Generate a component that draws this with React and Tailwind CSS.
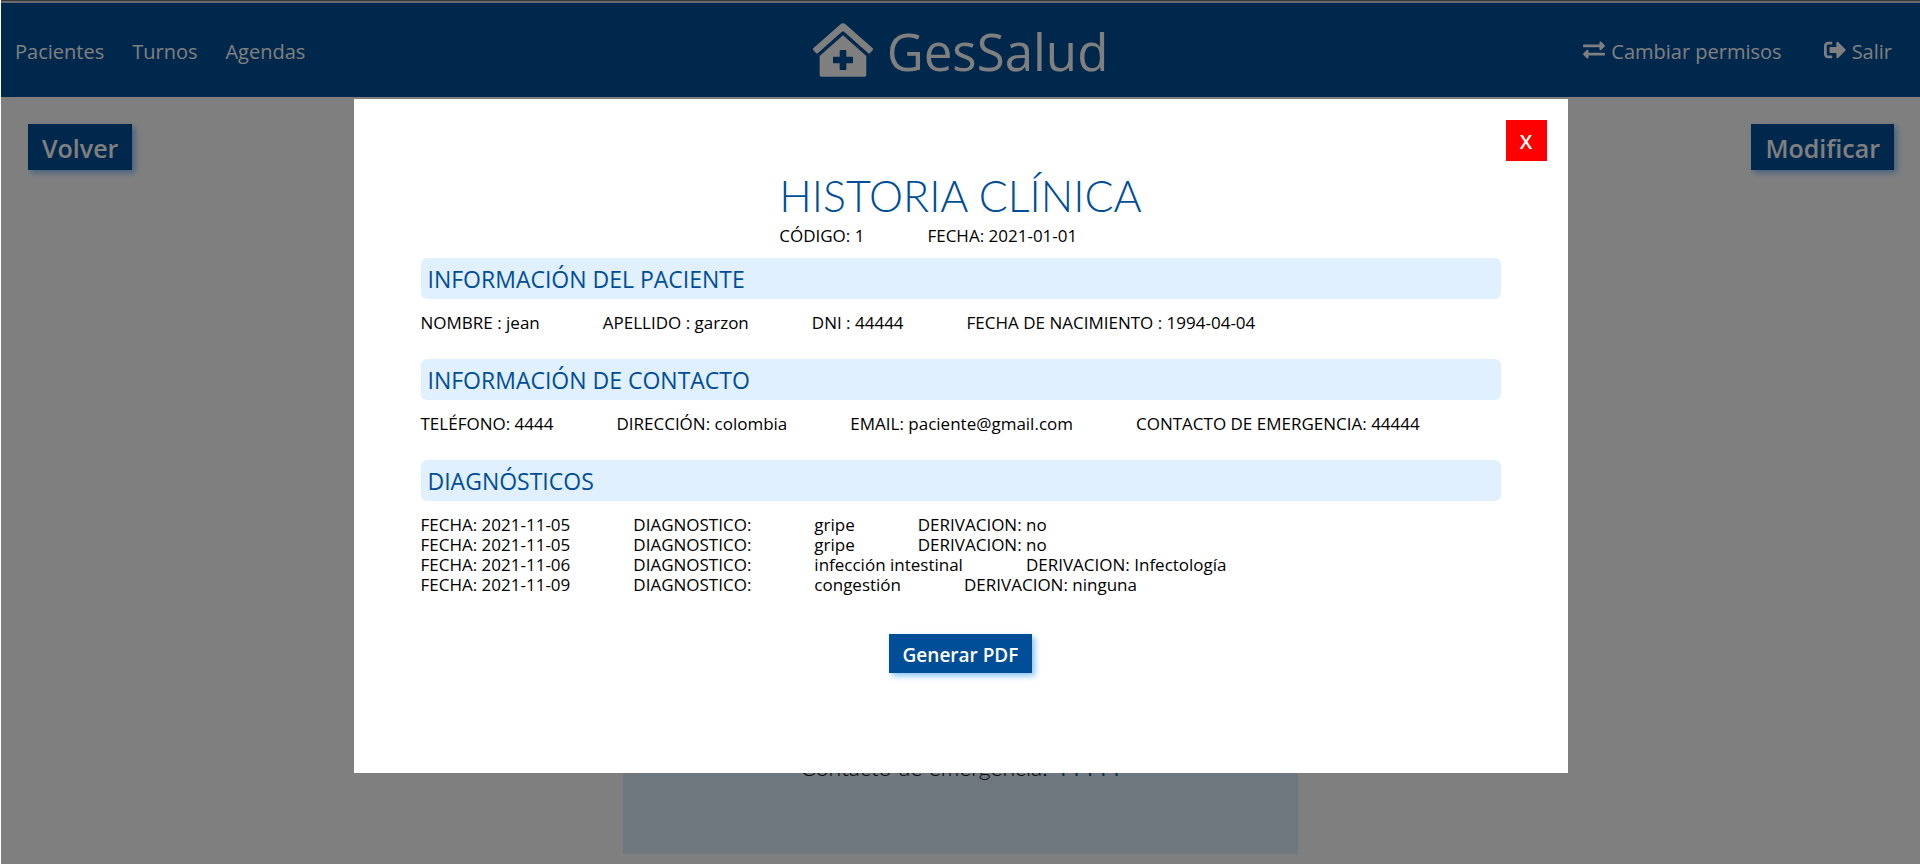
import { FaClinicMedical, FaExchangeAlt, FaSignOutAlt } from "react-icons/fa";

const patient = [
  ["NOMBRE :", "jean"],
  ["APELLIDO :", "garzon"],
  ["DNI :", "44444"],
  ["FECHA DE NACIMIENTO :", "1994-04-04"],
];

const contact = [
  ["TELÉFONO:", "4444"],
  ["DIRECCIÓN:", "colombia"],
  ["EMAIL:", "paciente@gmail.com"],
  ["CONTACTO DE EMERGENCIA:", "44444"],
];

const diagnoses = [
  { date: "2021-11-05", name: "gripe", referral: "no" },
  { date: "2021-11-05", name: "gripe", referral: "no" },
  { date: "2021-11-06", name: "infección intestinal", referral: "Infectología" },
  { date: "2021-11-09", name: "congestión", referral: "ninguna" },
];

function ActionButton({ children, className }) {
  return (
    <button
      type="button"
      className={`bg-[#004e98] px-[14px] pt-[3px] font-semibold text-white shadow-[3px_3px_6px_#8cc4ff] ${className}`}
    >
      {children}
    </button>
  );
}

function SectionTitle({ children }) {
  return (
    <h3 className="rounded-md bg-[#e0f0ff] px-[7px] pt-px text-[23px] leading-10 text-[#004e98]">
      {children}
    </h3>
  );
}

function Fields({ items }) {
  return (
    <div className="mt-[14px] mb-[26px] flex flex-wrap gap-x-[63px]">
      {items.map(([label, value]) => (
        <p key={label}>
          {label} {value}
        </p>
      ))}
    </div>
  );
}

export default function App() {
  return (
    <div className="relative min-h-screen overflow-hidden border-l border-white bg-white font-['Open_Sans',sans-serif]">
      <div className="h-[3px] border-t border-[#707070] bg-[#d0d4dc]" />
      <header className="grid h-[94px] grid-cols-[1fr_auto_1fr] items-center bg-[#004e98] px-[14px] pt-[3px] text-xl text-white">
        <nav className="flex gap-7">
          <a href="#pacientes">Pacientes</a>
          <a href="#turnos">Turnos</a>
          <a href="#agendas">Agendas</a>
        </nav>
        <div className="flex items-center justify-center gap-[14px]">
          <FaClinicMedical className="mb-[3px] size-[60px]" />
          <span className="text-[51px] leading-none">GesSalud</span>
        </div>
        <div className="flex justify-end gap-[42px] pr-[14px]">
          <a href="#permisos" className="flex items-center gap-[6px]">
            <FaExchangeAlt className="mb-1 size-[22px]" />
            Cambiar permisos
          </a>
          <a href="#salir" className="flex items-center gap-[6px]">
            <FaSignOutAlt className="mb-1 size-[22px]" />
            Salir
          </a>
        </div>
      </header>

      <main>
        <div className="flex justify-between pt-[27px] pr-[26px] pl-[27px]">
          <ActionButton className="h-[46px] text-[25px]">Volver</ActionButton>
          <ActionButton className="h-[46px] text-[25px]">Modificar</ActionButton>
        </div>
        <section className="mx-auto mt-[30px] flex h-[654px] w-full max-w-[675px] flex-col justify-end bg-[#e0f0ff] pb-[70px] text-center font-['Lato',sans-serif] text-[23px] font-light">
          <p>
            Contacto de emergencia:{" "}
            <span className="font-normal text-[#004e98]">44444</span>
          </p>
        </section>
      </main>

      <div className="absolute inset-0 bg-black/50 pt-[99px]">
        <div
          role="dialog"
          aria-modal="true"
          aria-labelledby="historia"
          className="mx-auto flex min-h-[674px] w-full max-w-[1214px] flex-col bg-white px-[67px] pt-[21px] text-[17px] leading-5 text-black"
        >
          <button
            type="button"
            aria-label="Cerrar"
            className="-mr-[46px] size-[41px] self-end bg-[#ff0000] pt-[3px] text-xl font-semibold text-white"
          >
            X
          </button>
          <div className="mt-[10px] mb-[12px] self-center">
            <h2
              id="historia"
              className="mb-[5px] font-['Lato',sans-serif] text-[43px] leading-[50px] font-light text-[#004e98]"
            >
              HISTORIA CLÍNICA
            </h2>
            <div className="flex gap-[63px]">
              <p>CÓDIGO: 1</p>
              <p>FECHA: 2021-01-01</p>
            </div>
          </div>
          <SectionTitle>INFORMACIÓN DEL PACIENTE</SectionTitle>
          <Fields items={patient} />
          <SectionTitle>INFORMACIÓN DE CONTACTO</SectionTitle>
          <Fields items={contact} />
          <SectionTitle>DIAGNÓSTICOS</SectionTitle>
          <ul className="mt-[14px]">
            {diagnoses.map((item, index) => (
              <li key={index} className="flex gap-[63px]">
                <span>FECHA: {item.date}</span>
                <span>DIAGNOSTICO:</span>
                <span>{item.name}</span>
                <span>DERIVACION: {item.referral}</span>
              </li>
            ))}
          </ul>
          <ActionButton className="mt-[39px] h-[39px] self-center text-[19px]">
            Generar PDF
          </ActionButton>
        </div>
      </div>
    </div>
  );
}
